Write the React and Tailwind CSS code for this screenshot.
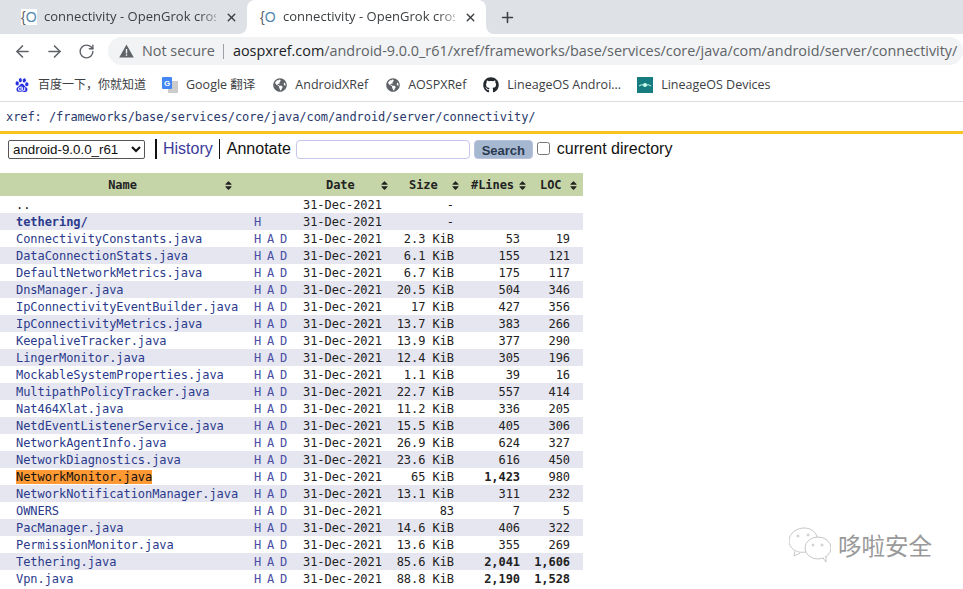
import React from "react";
import { ArrowLeft, ArrowRight, RotateCw, X, Plus } from "lucide-react";
import { FaGithub, FaGlobeAmericas, FaSort } from "react-icons/fa";
import { SiBaidu } from "react-icons/si";

const files = [
  ["..", "", "31-Dec-2021", "-", "", "", "", ""],
  ["tethering/", "H", "31-Dec-2021", "-", "", "", "", "dir"],
  ["ConnectivityConstants.java", "HAD", "31-Dec-2021", "2.3", "KiB", "53", "19"],
  ["DataConnectionStats.java", "HAD", "31-Dec-2021", "6.1", "KiB", "155", "121"],
  ["DefaultNetworkMetrics.java", "HAD", "31-Dec-2021", "6.7", "KiB", "175", "117"],
  ["DnsManager.java", "HAD", "31-Dec-2021", "20.5", "KiB", "504", "346"],
  ["IpConnectivityEventBuilder.java", "HAD", "31-Dec-2021", "17", "KiB", "427", "356"],
  ["IpConnectivityMetrics.java", "HAD", "31-Dec-2021", "13.7", "KiB", "383", "266"],
  ["KeepaliveTracker.java", "HAD", "31-Dec-2021", "13.9", "KiB", "377", "290"],
  ["LingerMonitor.java", "HAD", "31-Dec-2021", "12.4", "KiB", "305", "196"],
  ["MockableSystemProperties.java", "HAD", "31-Dec-2021", "1.1", "KiB", "39", "16"],
  ["MultipathPolicyTracker.java", "HAD", "31-Dec-2021", "22.7", "KiB", "557", "414"],
  ["Nat464Xlat.java", "HAD", "31-Dec-2021", "11.2", "KiB", "336", "205"],
  ["NetdEventListenerService.java", "HAD", "31-Dec-2021", "15.5", "KiB", "405", "306"],
  ["NetworkAgentInfo.java", "HAD", "31-Dec-2021", "26.9", "KiB", "624", "327"],
  ["NetworkDiagnostics.java", "HAD", "31-Dec-2021", "23.6", "KiB", "616", "450"],
  ["NetworkMonitor.java", "HAD", "31-Dec-2021", "65", "KiB", "1,423", "980"],
  ["NetworkNotificationManager.java", "HAD", "31-Dec-2021", "13.1", "KiB", "311", "232"],
  ["OWNERS", "HAD", "31-Dec-2021", "83", "", "7", "5"],
  ["PacManager.java", "HAD", "31-Dec-2021", "14.6", "KiB", "406", "322"],
  ["PermissionMonitor.java", "HAD", "31-Dec-2021", "13.6", "KiB", "355", "269"],
  ["Tethering.java", "HAD", "31-Dec-2021", "85.6", "KiB", "2,041", "1,606"],
  ["Vpn.java", "HAD", "31-Dec-2021", "88.8", "KiB", "2,190", "1,528"],
];

function Favicon({ active }) {
  return (
    <span
      className={`w-4 text-[14px] leading-4 font-['Liberation_Sans',sans-serif] text-[#5f6368] shrink-0 ${
        active ? "" : "bg-white"
      }`}
    >
      {"{"}
      <span className="text-[#4f86ad]">O</span>
    </span>
  );
}

function Tab({ active }) {
  return (
    <div
      className={`flex items-center h-[34px] w-[239px] pl-[13px] rounded-t-lg ${active ? "bg-white" : ""}`}
    >
      <Favicon active={active} />
      <span className="ml-[7px] w-[172px] whitespace-nowrap text-[13px] tracking-[0.02px] text-[#3c4043] [mask-image:linear-gradient(to_right,black_90%,rgba(0,0,0,0.35))]">
        connectivity - OpenGrok cross
      </span>
      <X size={13} strokeWidth={2.5} className="ml-[9px] text-[#3c4043] shrink-0" />
    </div>
  );
}

function Bookmark({ icon, label, className }) {
  return (
    <div className={`flex items-center ${className}`}>
      {icon}
      <span className="ml-[8px] text-[12.5px] text-[#3c4043] whitespace-nowrap">{label}</span>
    </div>
  );
}

function SortHead({ label, iconClass, className }) {
  return (
    <th className="p-0">
      <div className={`relative h-[23px] pt-[2px] flex items-center font-bold ${className}`}>
        {label}
        <FaSort size={11} className={`absolute text-[#222] ${iconClass}`} />
      </div>
    </th>
  );
}

function FileRow({ row, index }) {
  const [name, links, date, size, unit, lines, loc, kind] = row;
  const big = (v) => v.includes(",");
  return (
    <tr className={`h-[17px] ${index % 2 ? "bg-[#e6e6f0]" : "bg-white"}`}>
      <td className="p-0 pt-[2px] pl-[16px] whitespace-nowrap">
        <span
          className={`${name === "NetworkMonitor.java" ? "bg-[#ff9933] text-[#111]" : "text-[#2a3a8c]"} ${
            kind === "dir" ? "font-bold" : ""
          } ${name === ".." ? "text-[#111]" : ""}`}
        >
          {name}
        </span>
      </td>
      <td className="p-0 pt-[2px] pl-[9px] text-[#4a4fa5]">
        <div className="flex gap-[6px]">
          {links.split("").map((l) => (
            <span key={l} className="w-[7px]">
              {l}
            </span>
          ))}
        </div>
      </td>
      <td className="p-0 pt-[2px] pl-[6px] text-[#222]">{date}</td>
      <td className="p-0 pt-[2px] pr-[9px] text-[#222] text-right whitespace-pre">
        {size === "-" || !unit ? size : `${size} ${unit}`}
      </td>
      <td className={`p-0 pt-[2px] pr-[11px] text-right text-[#222] ${big(lines) ? "font-bold" : ""}`}>{lines}</td>
      <td className={`p-0 pt-[2px] pr-[13px] text-right text-[#222] ${big(loc) ? "font-bold" : ""}`}>{loc}</td>
    </tr>
  );
}

export default function App() {
  return (
    <div className="relative w-[963px] h-[589px] overflow-hidden bg-white font-['Open_Sans','Noto_Sans_CJK_SC',sans-serif]">
      {/* tab strip */}
      <div className="flex h-[34px]">
        <div className="pl-[8px] bg-[#dee1e6] rounded-br-lg">
          <Tab />
        </div>
        <div className="bg-[#dee1e6]">
          <Tab active />
        </div>
        <div className="flex-1 flex items-center bg-[#dee1e6] rounded-bl-lg pl-[13px]">
          <Plus size={17} strokeWidth={2.2} className="text-[#3c4043]" />
        </div>
      </div>

      {/* address bar */}
      <div className="flex items-center h-[34px] pl-[13px]">
        <ArrowLeft size={19} className="text-[#5f6368]" />
        <ArrowRight size={19} className="ml-[13px] text-[#5f6368]" />
        <RotateCw size={17} className="ml-[14px] text-[#5f6368]" />
        <div className="flex items-center ml-[13px] h-[28px] w-[856px] rounded-full bg-[#f1f3f4] pl-[11px] text-[14.4px] whitespace-nowrap">
          <svg width="15" height="14" viewBox="0 0 15 14">
            <path d="M7.5 0.5 L14.8 13.5 H0.2 Z" fill="#5f6368" />
            <rect x="6.8" y="5" width="1.4" height="4.5" fill="#f1f3f4" />
            <rect x="6.8" y="10.3" width="1.4" height="1.5" fill="#f1f3f4" />
          </svg>
          <span className="ml-[8px] text-[#5f6368]">Not secure</span>
          <span className="ml-[8px] mr-[9px] w-px h-[15px] bg-[#9aa0a6]" />
          <span className="text-[#202124]">aospxref.com</span>
          <span className="text-[#5f6368]">/android-9.0.0_r61/xref/frameworks/base/services/core/java/com/android/server/connectivity/</span>
        </div>
      </div>

      {/* bookmarks */}
      <div className="flex items-center h-[34px] pl-[15px] pt-[1px] border-b border-[#dadce0]">
        <div className="flex items-center">
          <SiBaidu size={14} className="text-[#2932e1]" />
          <span className="ml-[9px] text-[12px] text-[#3c4043] whitespace-nowrap">百度一下，你就知道</span>
        </div>
        <Bookmark
          className="ml-[16px]"
          label="Google 翻译"
          icon={
            <svg width="16" height="16" viewBox="0 0 16 16">
              <rect x="6" y="4" width="10" height="12" fill="#ccc" />
              <rect x="0" y="0" width="10" height="12" rx="1" fill="#4285f4" />
              <text x="2" y="9" fontSize="8" fontWeight="700" fill="#fff" fontFamily="Liberation Sans">G</text>
            </svg>
          }
        />
        <Bookmark className="ml-[18px]" icon={<FaGlobeAmericas size={14} className="text-[#5f6368]" />} label="AndroidXRef" />
        <Bookmark className="ml-[18px]" icon={<FaGlobeAmericas size={14} className="text-[#5f6368]" />} label="AOSPXRef" />
        <Bookmark className="ml-[17px]" icon={<FaGithub size={16} className="text-[#24292e]" />} label="LineageOS Androi..." />
        <Bookmark
          className="ml-[16px]"
          label="LineageOS Devices"
          icon={
            <svg width="16" height="16" viewBox="0 0 16 16">
              <rect width="16" height="16" fill="#167c80" />
              <path d="M2 9 Q5 7 6 8 M14 9 Q11 7 10 8" stroke="#cfe" strokeWidth="1" fill="none" />
              <circle cx="8" cy="8" r="2" fill="#cfe" />
            </svg>
          }
        />
      </div>

      {/* page header */}
      <div className="h-[29px] pl-[6px] flex items-center font-['DejaVu_Sans_Mono',monospace] text-[12px] tracking-[-0.07px] text-[#2a3a6c] border-b-[3px] border-[#f9c41f] box-content">
        xref: /frameworks/base/services/core/java/com/android/server/connectivity/
      </div>

      {/* nav form */}
      <div className="flex items-center h-[30px] pl-[8px] font-['Liberation_Sans',sans-serif] text-[16px] text-[#111]">
        <select
          defaultValue="r61"
          className="w-[137px] h-[19px] bg-white border border-[#555] rounded-[2px] text-[13.33px] mt-[1px]"
        >
          <option value="r61">android-9.0.0_r61</option>
        </select>
        <span className="ml-[10px] border-l-2 border-[#111] pl-[6px] leading-[20px] text-[#3a3a9c]">History</span>
        <span className="ml-[6px] border-l border-[#111] pl-[7px] leading-[20px]">Annotate</span>
        <div className="ml-[5px] w-[174px] h-[19px] bg-white border border-[#c5c5ee] rounded-[4px]" />
        <button className="ml-[4px] w-[59px] h-[19px] rounded-[4px] border border-[#b9c0e0] bg-[#a6b8d0] text-[13px] font-bold text-[#2a3a50]">
          Search
        </button>
        <input type="checkbox" className="ml-[4px] w-[13px] h-[13px] mb-[2px]" readOnly />
        <span className="ml-[7px]">current directory</span>
      </div>

      {/* file table */}
      <table className="mt-[9px] w-[583px] table-fixed border-collapse font-['DejaVu_Sans_Mono',monospace] text-[12px] tracking-[-0.06px] leading-[15px]">
        <colgroup>
          <col className="w-[245px]" />
          <col className="w-[52px]" />
          <col className="w-[95px]" />
          <col className="w-[71px]" />
          <col className="w-[68px]" />
          <col className="w-[52px]" />
        </colgroup>
        <thead>
          <tr className="bg-[#c5d5a8] text-[#222]">
            <SortHead label="Name" className="justify-center" iconClass="left-[223px]" />
            <th className="p-0" />
            <SortHead label="Date" className="pl-[29px]" iconClass="left-[82px]" />
            <SortHead label="Size" className="pl-[17px]" iconClass="left-[58px]" />
            <SortHead label="#Lines" className="pl-[8px]" iconClass="left-[54px]" />
            <SortHead label="LOC" className="pl-[9px]" iconClass="left-[37px]" />
          </tr>
        </thead>
        <tbody>
          {files.map((row, i) => (
            <FileRow key={row[0]} row={row} index={i} />
          ))}
        </tbody>
      </table>

      {/* watermark */}
      <div className="absolute left-[789px] top-[527px] flex items-center text-[#999]">
        <svg width="42" height="38" viewBox="0 0 42 38" fill="none" stroke="#b8b8b8" strokeWidth="0.8">
          <path d="M17 25 C6 27 0 20 0 14 C0 6 8 1 15 1 C22 1 27 5 28 10" fill="#fff" />
          <path d="M6 24 L5 29 L11 26" fill="#fff" />
          <ellipse cx="29" cy="21" rx="13" ry="11" fill="#fff" />
          <path d="M34 31 L37 35 L37 29" fill="#fff" />
          <circle cx="9" cy="9" r="1" />
          <circle cx="19" cy="8" r="1" />
          <circle cx="24" cy="18" r="1" />
          <circle cx="33" cy="18" r="1" />
        </svg>
        <span className="ml-[7px] text-[23.5px] leading-none font-['Noto_Sans_CJK_SC',sans-serif] whitespace-nowrap">
          哆啦安全
        </span>
      </div>
    </div>
  );
}
